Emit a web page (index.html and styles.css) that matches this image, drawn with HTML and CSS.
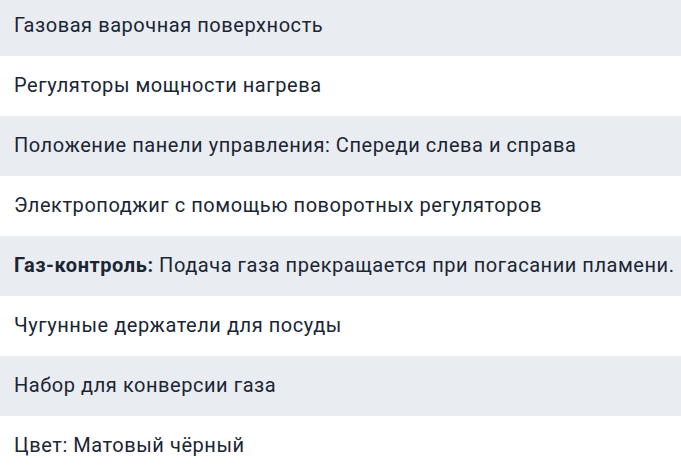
FILE: index.html
```html
<!DOCTYPE html>
<html lang="ru">
<head>
<meta charset="utf-8">
<link rel="stylesheet" href="styles.css">
</head>
<body>
<ul class="features">
  <li class="row">Газовая варочная поверхность</li>
  <li class="row">Регуляторы мощности нагрева</li>
  <li class="row">Положение панели управления: Спереди слева и справа</li>
  <li class="row">Электроподжиг с помощью поворотных регуляторов</li>
  <li class="row"><span><b class="label">Газ-контроль:</b> Подача газа прекращается при погасании пламени.</span></li>
  <li class="row">Чугунные держатели для посуды</li>
  <li class="row">Набор для конверсии газа</li>
  <li class="row">Цвет: Матовый чёрный</li>
</ul>
</body>
</html>
```

FILE: styles.css
```css
html, body {
  margin: 0;
  padding: 0;
  background: #ffffff;
}
.features {
  list-style: none;
  margin: -4px 0 0 0;
  padding: 0;
  font-family: Roboto, "Noto Sans", sans-serif;
  font-size: 20px;
  letter-spacing: 0.55px;
  color: #1a2535;
}
.row {
  height: 60px;
  display: flex;
  align-items: center;
  padding: 0 14px 2px;
  box-sizing: border-box;
  white-space: nowrap;
}
.row:nth-child(odd) {
  background: #e9ecf0;
}
.label {
  font-weight: 700;
}
```
